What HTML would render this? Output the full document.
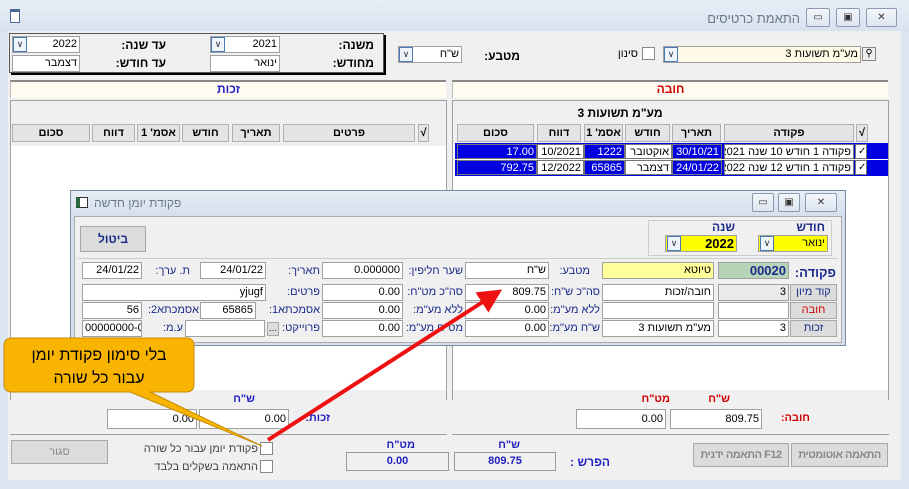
<!DOCTYPE html>
<html><head><meta charset="utf-8"><style>
*{box-sizing:border-box;margin:0;padding:0}
body{width:909px;height:489px;overflow:hidden;background:#dce6f2;font-family:"Liberation Sans","DejaVu Sans",sans-serif;font-size:11px;position:relative;color:#000}
.a{position:absolute}
.in{position:absolute;background:#fff;border:1px solid #a0a0a0;height:17px;line-height:15px;padding:0 2px;text-align:right;white-space:nowrap;overflow:hidden}
.lb{position:absolute;white-space:nowrap;direction:rtl;text-align:right}
.dd{position:absolute;width:14px;height:15px;border:1px solid #4a7ab8;background:#eef4fb;font-size:9px;line-height:12px;text-align:center;color:#333}
.hd{position:absolute;background:#e4e4e4;border:1px solid #b0b0b0;height:18px;line-height:16px;text-align:center;font-weight:bold;font-size:11px;white-space:nowrap}
.btn{position:absolute;background:#dcdcdc;border:1px solid #a8a8a8;text-align:center;font-size:11px;white-space:nowrap;overflow:hidden}
.wb{position:absolute;width:24px;height:19px;border:1px solid #8a9ab0;border-radius:2px;background:linear-gradient(#f4f7fb,#dde5ef);font-size:10px;text-align:center;line-height:17px;color:#333}
.cell{position:absolute;height:15px;line-height:14px;padding:0 2px;text-align:right;border:1px solid #777;font-size:11px;white-space:nowrap;overflow:hidden}
.blue{background:#0000e0;color:#fff}
.cb{position:absolute;width:13px;height:13px;background:#fff;border:1px solid #888}
</style></head><body>
<div class="a" style="left:0;top:0;width:909px;height:32px;background:linear-gradient(#e8eef6,#d8e2ee)"></div>
<div class="a" style="left:10px;top:9px;width:10px;height:14px;border:1px solid #4a6a9a;background:#fff;border-top:3px solid #4a6a9a"></div>
<div class="lb" style="left:700px;top:11px;width:100px;color:#6a7a8a;font-size:13px">התאמת כרטיסים</div>
<div class="wb" style="left:806px;top:8px">▭</div><div class="wb" style="left:836px;top:8px">▣</div><div class="wb" style="left:866px;top:8px;width:31px">✕</div>
<div class="a" style="left:8px;top:31px;width:893px;height:449px;background:#f0f0f0"></div>
<div class="a" style="left:9px;top:33px;width:375px;height:40px;border:1px solid #555;box-shadow:2px 2px 0 #000;background:#f0f0f0"></div>
<div class="lb" style="left:320px;top:38px;width:54px;font-weight:bold;font-size:12px">משנה:</div>
<div class="in" style="left:210px;top:36px;width:70px">2021</div><div class="dd" style="left:211px;top:37px">∨</div>
<div class="lb" style="left:110px;top:38px;width:56px;font-weight:bold;font-size:12px">עד שנה:</div>
<div class="in" style="left:12px;top:36px;width:68px">2022</div><div class="dd" style="left:13px;top:37px">∨</div>
<div class="lb" style="left:310px;top:56px;width:64px;font-weight:bold;font-size:12px">מחודש:</div>
<div class="in" style="left:210px;top:55px;width:70px">ינואר</div>
<div class="lb" style="left:100px;top:56px;width:66px;font-weight:bold;font-size:12px">עד חודש:</div>
<div class="in" style="left:12px;top:55px;width:68px">דצמבר</div>
<div class="lb" style="left:470px;top:49px;width:50px;font-weight:bold;font-size:12px">מטבע:</div>
<div class="in" style="left:398px;top:46px;width:64px">ש"ח</div><div class="dd" style="left:399px;top:47px">∨</div>
<div class="lb" style="left:600px;top:48px;width:38px">סינון</div>
<div class="cb" style="left:642px;top:47px"></div>
<div class="in" style="left:663px;top:46px;width:198px;background:#fffbe6">מע"מ תשועות 3</div><div class="dd" style="left:664px;top:47px">∨</div>
<div class="a" style="left:862px;top:47px;width:14px;height:14px;border:1px solid #888;background:#eee;font-size:10px;line-height:12px;text-align:center">⚲</div>
<div class="a" style="left:10px;top:80px;width:436px;height:18px;background:#fffbf0;border-top:2px solid #888;border-left:1px solid #bbb;text-align:center;color:#2020c0;font-weight:bold;line-height:15px;font-size:12px">זכות</div>
<div class="a" style="left:452px;top:80px;width:436px;height:18px;background:#fffbf0;border-top:2px solid #888;border-left:1px solid #bbb;text-align:center;color:#d00000;font-weight:bold;line-height:15px;font-size:12px">חובה</div>
<div class="a" style="left:10px;top:100px;width:437px;height:300px;border:1px solid #a0a0a0;background:#fff"></div>
<div class="a" style="left:11px;top:101px;width:435px;height:45px;background:#f0f0f0"></div>
<div class="a" style="left:452px;top:100px;width:437px;height:300px;border:1px solid #a0a0a0;background:#fff"></div>
<div class="a" style="left:453px;top:101px;width:435px;height:43px;background:#f0f0f0"></div>
<div class="lb" style="left:560px;top:106px;width:120px;font-weight:bold;text-align:center;font-size:12px">מע"מ תשועות 3</div>
<div class="hd" style="left:856px;top:124px;width:12px">√</div>
<div class="hd" style="left:724px;top:124px;width:130px">פקודה</div>
<div class="hd" style="left:672px;top:124px;width:49px">תאריך</div>
<div class="hd" style="left:625px;top:124px;width:45px">חודש</div>
<div class="hd" style="left:584px;top:124px;width:39px">אסמ' 1</div>
<div class="hd" style="left:537px;top:124px;width:44px">דווח</div>
<div class="hd" style="left:457px;top:124px;width:77px">סכום</div>
<div class="a blue" style="left:455px;top:143px;width:433px;height:16px"></div>
<div class="a blue" style="left:455px;top:160px;width:433px;height:16px"></div>
<div class="cell" style="left:855px;top:144px;width:12px;background:#fff;color:#000;font-size:10px">✓</div>
<div class="cell" style="left:855px;top:160px;width:12px;background:#fff;color:#000;font-size:10px">✓</div>
<div class="cell" style="left:724px;top:144px;width:130px;background:#fff;direction:rtl">פקודה 1 חודש 10 שנה 2021</div>
<div class="cell" style="left:724px;top:160px;width:130px;background:#fff;direction:rtl">פקודה 1 חודש 12 שנה 2022</div>
<div class="cell blue" style="left:672px;top:144px;width:50px">30/10/21</div>
<div class="cell blue" style="left:672px;top:160px;width:50px">24/01/22</div>
<div class="cell" style="left:625px;top:144px;width:47px;background:#fff">אוקטובר</div>
<div class="cell" style="left:625px;top:160px;width:47px;background:#fff">דצמבר</div>
<div class="cell blue" style="left:584px;top:144px;width:41px">1222</div>
<div class="cell blue" style="left:584px;top:160px;width:41px">65865</div>
<div class="cell" style="left:537px;top:144px;width:47px;background:#fff">10/2021</div>
<div class="cell" style="left:537px;top:160px;width:47px;background:#fff">12/2022</div>
<div class="cell blue" style="left:457px;top:144px;width:80px">17.00</div>
<div class="cell blue" style="left:457px;top:160px;width:80px">792.75</div>
<div class="hd" style="left:418px;top:124px;width:11px">√</div>
<div class="hd" style="left:283px;top:124px;width:132px">פרטים</div>
<div class="hd" style="left:232px;top:124px;width:48px">תאריך</div>
<div class="hd" style="left:182px;top:124px;width:47px">חודש</div>
<div class="hd" style="left:137px;top:124px;width:43px">אסמ' 1</div>
<div class="hd" style="left:92px;top:124px;width:43px">דווח</div>
<div class="hd" style="left:12px;top:124px;width:78px">סכום</div>
<div class="a" style="left:11px;top:390px;width:435px;height:44px;background:#f0f0f0"></div>
<div class="a" style="left:453px;top:390px;width:435px;height:44px;background:#f0f0f0"></div>
<div class="a" style="left:10px;top:434px;width:437px;height:1px;background:#a0a0a0"></div>
<div class="a" style="left:452px;top:434px;width:437px;height:1px;background:#a0a0a0"></div>
<div class="lb" style="left:700px;top:393px;width:30px;color:#d00000;font-weight:bold">ש"ח</div>
<div class="lb" style="left:630px;top:393px;width:40px;color:#d00000;font-weight:bold">מט"ח</div>
<div class="in" style="left:576px;top:409px;width:90px;height:20px;line-height:18px">0.00</div>
<div class="in" style="left:670px;top:409px;width:92px;height:20px;line-height:18px">809.75</div>
<div class="lb" style="left:770px;top:412px;width:40px;color:#d00000;font-weight:bold">חובה:</div>
<div class="lb" style="left:225px;top:393px;width:30px;color:#2020c0;font-weight:bold">ש"ח</div>
<div class="in" style="left:107px;top:409px;width:90px;height:20px;line-height:18px">0.00</div>
<div class="in" style="left:199px;top:409px;width:90px;height:20px;line-height:18px">0.00</div>
<div class="lb" style="left:290px;top:412px;width:40px;color:#2020c0;font-weight:bold">זכות:</div>
<div class="btn" style="left:11px;top:440px;width:97px;height:24px;line-height:22px;color:#888">סגור</div>
<div class="cb" style="left:260px;top:442px"></div><div class="cb" style="left:260px;top:460px"></div>
<div class="lb" style="left:120px;top:443px;width:138px;color:#444">פקודת יומן עבור כל שורה</div>
<div class="lb" style="left:130px;top:461px;width:128px;color:#444">התאמה בשקלים בלבד</div>
<div class="lb" style="left:385px;top:439px;width:30px;color:#2020c0;font-weight:bold">מט"ח</div>
<div class="lb" style="left:490px;top:439px;width:30px;color:#2020c0;font-weight:bold">ש"ח</div>
<div class="a" style="left:346px;top:452px;width:103px;height:19px;border:1px solid #999;background:#f0f0f0;text-align:center;color:#2020c0;font-weight:bold;font-size:11px;line-height:17px">0.00</div>
<div class="a" style="left:454px;top:452px;width:102px;height:19px;border:1px solid #999;background:#f0f0f0;text-align:center;color:#2020c0;font-weight:bold;font-size:11px;line-height:17px">809.75</div>
<div class="lb" style="left:560px;top:455px;width:50px;color:#2020c0;font-weight:bold;font-size:12px">הפרש :</div>
<div class="btn" style="left:693px;top:443px;width:96px;height:24px;line-height:22px;color:#888;font-weight:bold;letter-spacing:-0.5px">התאמה ידנית F12</div>
<div class="btn" style="left:791px;top:443px;width:97px;height:24px;line-height:22px;color:#888;font-weight:bold;letter-spacing:-0.5px">התאמה אוטומטית</div>
<div class="a" style="left:70px;top:190px;width:776px;height:156px;border:1px solid #7a8aa0;background:linear-gradient(#e6edf6,#d6e0ec 24px,#d6e0ec)"></div>
<div class="a" style="left:76px;top:197px;width:12px;height:11px;border:1px solid #333;background:#fff;border-left:4px solid #2a6a3a"></div>
<div class="lb" style="left:94px;top:196px;width:110px;color:#6a7a8a;text-align:left;font-size:12px">פקודת יומן חדשה</div>
<div class="wb" style="left:752px;top:193px;width:22px">▭</div><div class="wb" style="left:778px;top:193px;width:22px">▣</div><div class="wb" style="left:805px;top:193px;width:32px">✕</div>
<div class="a" style="left:74px;top:216px;width:768px;height:127px;background:#f0f0f0;border:1px solid #aaa"></div>
<div class="btn" style="left:80px;top:226px;width:66px;height:26px;line-height:24px;font-weight:bold;color:#1a2a8a;font-size:12px">ביטול</div>
<div class="a" style="left:648px;top:220px;width:184px;height:36px;border:1px solid #ccc"></div>
<div class="lb" style="left:780px;top:220px;width:45px;color:#1a2a8a;font-weight:bold;font-size:12px">חודש</div>
<div class="lb" style="left:690px;top:220px;width:45px;color:#1a2a8a;font-weight:bold;font-size:12px">שנה</div>
<div class="in" style="left:665px;top:235px;width:72px;background:#ffff00;font-weight:bold;font-size:13px">2022</div><div class="dd" style="left:667px;top:236px">∨</div>
<div class="in" style="left:758px;top:235px;width:70px;background:#ffff00">ינואר</div><div class="dd" style="left:760px;top:236px">∨</div>
<div class="a" style="left:78px;top:258px;width:760px;height:1px;background:#ccc"></div>
<div class="lb" style="left:790px;top:265px;width:46px;color:#1a2a8a;font-weight:bold;font-size:13px">פקודה:</div>
<div class="in" style="left:718px;top:262px;width:71px;background:#b8d4b8;color:#1a2a8a;font-weight:bold;font-size:13px">00020</div>
<div class="in" style="left:602px;top:262px;width:112px;background:#ffff99">טיוטא</div>
<div class="lb" style="left:540px;top:265px;width:50px;color:#1a2a8a">מטבע:</div>
<div class="in" style="left:465px;top:262px;width:84px">ש"ח</div>
<div class="lb" style="left:400px;top:265px;width:63px;color:#1a2a8a">שער חליפין:</div>
<div class="in" style="left:322px;top:262px;width:81px">0.000000</div>
<div class="lb" style="left:280px;top:265px;width:40px;color:#1a2a8a">תאריך:</div>
<div class="in" style="left:200px;top:262px;width:66px">24/01/22</div>
<div class="lb" style="left:145px;top:265px;width:45px;color:#1a2a8a">ת. ערך:</div>
<div class="in" style="left:82px;top:262px;width:60px">24/01/22</div>
<div class="btn" style="left:790px;top:284px;width:47px;height:17px;line-height:15px;color:#1a2a8a">קוד מיון</div>
<div class="in" style="left:718px;top:284px;width:71px;background:#eaeaea">3</div>
<div class="in" style="left:602px;top:284px;width:112px">חובה/זכות</div>
<div class="lb" style="left:545px;top:286px;width:55px;color:#1a2a8a">סה"כ ש"ח:</div>
<div class="in" style="left:465px;top:284px;width:84px">809.75</div>
<div class="lb" style="left:400px;top:286px;width:63px;color:#1a2a8a">סה"כ מט"ח:</div>
<div class="in" style="left:322px;top:284px;width:81px">0.00</div>
<div class="lb" style="left:280px;top:286px;width:40px;color:#1a2a8a">פרטים:</div>
<div class="in" style="left:82px;top:284px;width:184px">yjugf</div>
<div class="btn" style="left:790px;top:302px;width:47px;height:17px;line-height:15px;color:#d00000">חובה</div>
<div class="in" style="left:718px;top:302px;width:71px"></div>
<div class="in" style="left:602px;top:302px;width:112px"></div>
<div class="lb" style="left:545px;top:304px;width:55px;color:#1a2a8a">ללא מע"מ:</div>
<div class="in" style="left:465px;top:302px;width:84px">0.00</div>
<div class="lb" style="left:400px;top:304px;width:63px;color:#1a2a8a">ללא מע"מ:</div>
<div class="in" style="left:322px;top:302px;width:81px">0.00</div>
<div class="lb" style="left:258px;top:304px;width:62px;color:#1a2a8a">אסמכתא1:</div>
<div class="in" style="left:200px;top:302px;width:56px">65865</div>
<div class="lb" style="left:143px;top:304px;width:56px;color:#1a2a8a">אסמכתא2:</div>
<div class="in" style="left:82px;top:302px;width:60px">56</div>
<div class="btn" style="left:790px;top:320px;width:47px;height:17px;line-height:15px;color:#1a2a8a">זכות</div>
<div class="in" style="left:718px;top:320px;width:71px">3</div>
<div class="in" style="left:602px;top:320px;width:112px">מע"מ תשועות 3</div>
<div class="lb" style="left:545px;top:322px;width:55px;color:#1a2a8a">ש"ח מע"מ:</div>
<div class="in" style="left:465px;top:320px;width:84px">0.00</div>
<div class="lb" style="left:400px;top:322px;width:63px;color:#1a2a8a">מט"ח מע"מ:</div>
<div class="in" style="left:322px;top:320px;width:81px">0.00</div>
<div class="lb" style="left:280px;top:322px;width:40px;color:#1a2a8a">פרוייקט:</div>
<div class="btn" style="left:267px;top:322px;width:12px;height:14px;font-size:9px;line-height:10px">...</div>
<div class="in" style="left:185px;top:320px;width:80px"></div>
<div class="lb" style="left:145px;top:322px;width:38px;color:#1a2a8a">ע.מ:</div>
<div class="in" style="left:82px;top:320px;width:60px">00000000-0</div>
<div class="a" style="left:0;top:480px;width:909px;height:9px;background:#dce6f2"></div>
<svg class="a" style="left:0;top:0" width="909" height="489">
<defs><marker id="m" markerWidth="6" markerHeight="6" refX="3" refY="3" orient="auto"><path d="M0,0L6,3L0,6z" fill="#ee1111"/></marker></defs>
<line x1="268" y1="440" x2="492" y2="296" stroke="#ee1111" stroke-width="4" marker-end="url(#m)"/>
<path d="M12,338 H186 Q194,338 194,346 V384 Q194,392 186,392 H150 L262,446 L130,392 H12 Q4,392 4,384 V346 Q4,338 12,338Z" fill="#f8b400" stroke="#c88a00" stroke-width="1"/>
<text x="99" y="360" text-anchor="middle" font-family="Liberation Sans,DejaVu Sans,sans-serif" font-size="16" direction="rtl">בלי סימון פקודת יומן</text>
<text x="99" y="383" text-anchor="middle" font-family="Liberation Sans,DejaVu Sans,sans-serif" font-size="16" direction="rtl">עבור כל שורה</text>
</svg>
</body></html>
